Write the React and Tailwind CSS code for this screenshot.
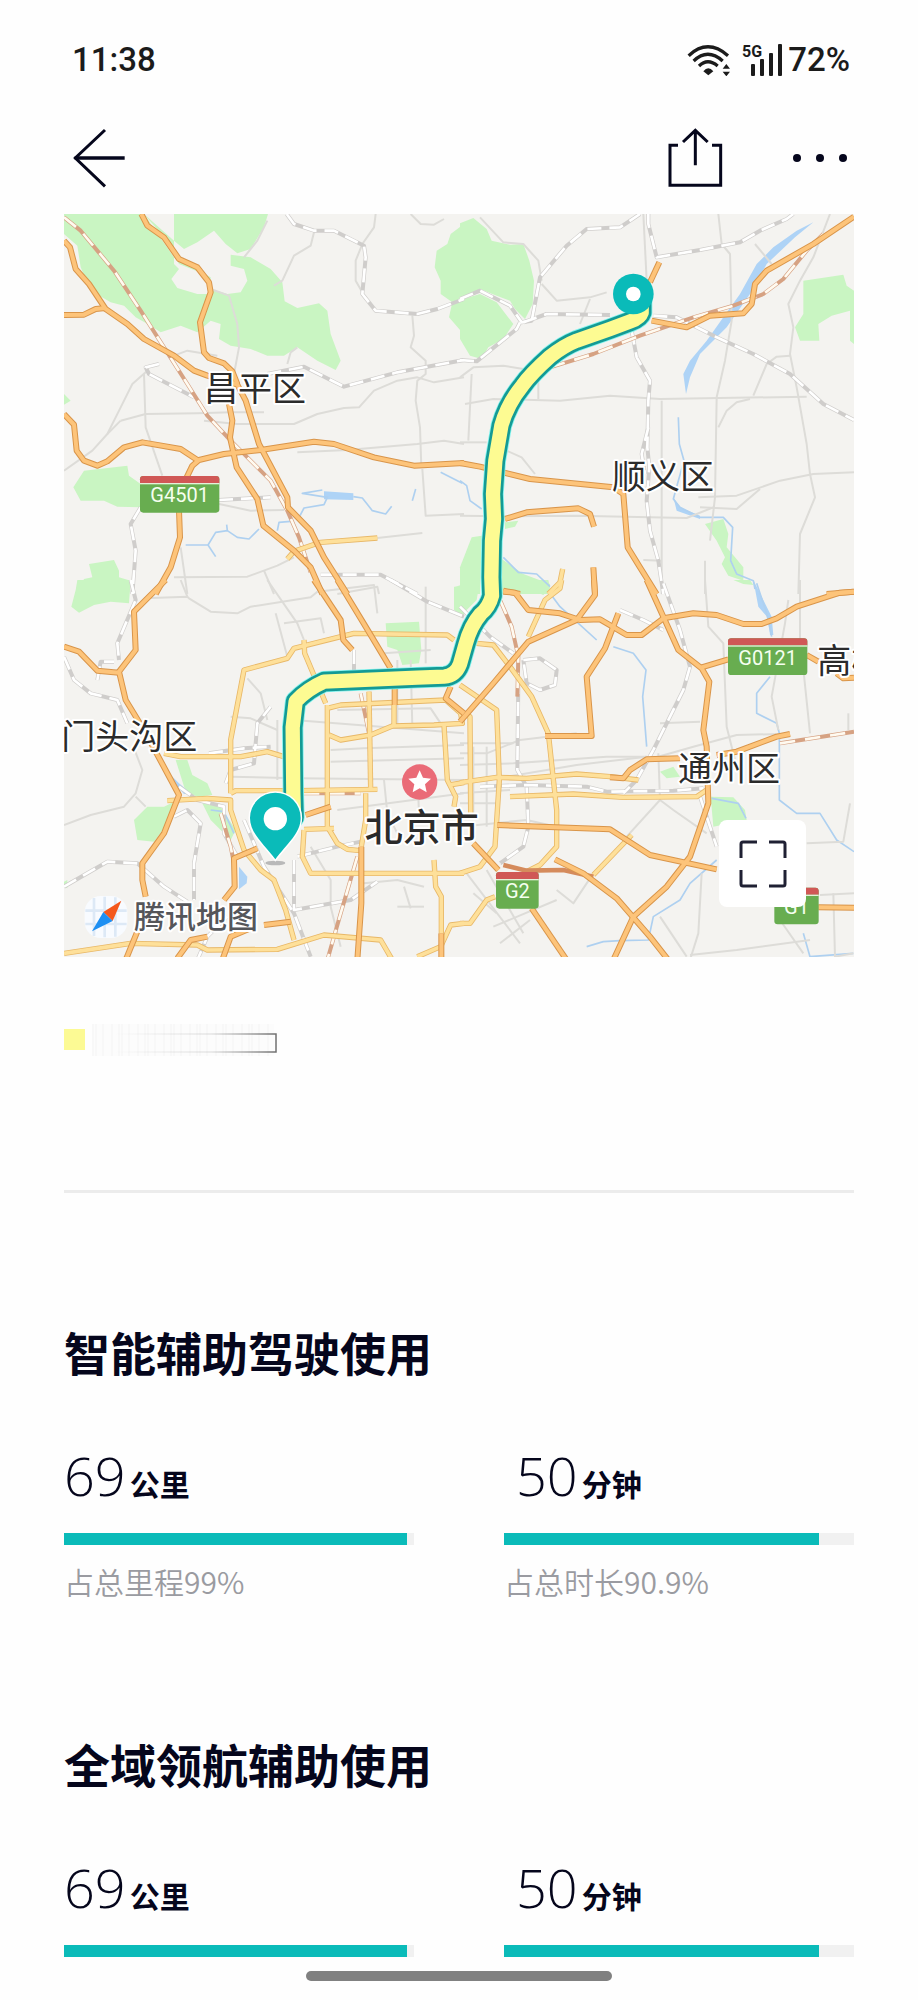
const mapTiles = [
  {
    x: 0,
    y: 0,
    parks: [
      "0,0 240,0 300,70 345,150 420,180 440,240 400,240 340,222 322,195 345,165 330,150 330,80 360,105 400,85 450,50 485,90 520,118 560,105 600,40 612,0 330,0 330,80 240,0 0,0 0,60 40,95 50,160 80,230 140,265 180,275 215,310 260,335 290,355 350,335 400,355 440,320 470,330 465,375 500,395 560,405 610,425 660,425 700,400 760,440 815,468 830,440 800,360 790,290 765,268 700,282 662,262 655,205 620,165 560,130 500,122 500,155 540,165 550,200 530,235 490,240 440,225 440,190 330,130 240,0",
      "60,770 190,755 195,785 230,810 230,880 160,878 120,860 50,860 28,820",
      "75,1050 150,1038 165,1070 165,1090 200,1100 195,1140 40,1140 60,1095 85,1090",
      "0,540 20,560 0,572",
      "1200,30 1160,60 1150,90 1118,110 1112,160 1130,200 1130,240 1165,265 1155,310 1190,350 1200,370",
      "1170,1120 1200,1110 1200,1140 1170,1140",
    ],
    water: ["780,832 868,838 868,858 780,856"],
    streams: [
      "708,905 720,882 780,872 790,850 715,838 775,828",
      "868,848 895,852 925,890 965,900 983,877",
      "365,993 432,993 455,955 490,950 520,970 555,975 585,945",
      "432,993 455,1028",
      "640,950 645,925 680,922",
      "490,950 488,932",
      "1055,825 1045,860",
      "1130,775 1195,808",
    ],
    minor: [
      "440,225 495,245 520,330 525,400 510,480",
      "610,20 580,80 540,130",
      "750,55 740,95 690,125 655,200 630,215",
      "935,0 930,40 895,90 875,140 875,200 895,235",
      "1040,0 1070,30 1110,32 1140,15",
      "1045,305 1050,365 1040,400 1085,440 1085,480 1060,500 1055,560 1068,640 1072,760",
      "0,770 85,710 130,660 170,580 205,510 250,470",
      "240,480 245,640 295,785",
      "170,620 245,600 400,598 500,595 600,595",
      "420,620 520,630 690,630 760,600 840,582 885,580 930,530 1000,500 1060,490 1110,505 1200,490",
      "700,715 850,708 1060,690 1140,680 1200,690",
      "1075,765 1085,905 1200,900",
      "330,1090 550,1088 640,1055 690,1030",
      "350,1000 370,1140",
      "600,1070 630,1140",
      "465,870 560,890 660,888",
      "940,972 1075,957",
      "330,425 370,410 460,425",
      "670,450 680,415 700,400",
      "820,1140 940,1118 945,1140",
      "170,620 130,660",
    ],
    rails: [
      "668,0 690,30 750,50 810,50 900,95 905,130 895,240 935,290 1060,300 1120,285 1200,255",
      "610,480 720,458 840,518 1000,475 1200,438",
      "285,450 245,460 255,480 390,550",
      "770,1082 950,1082 1060,1140",
      "465,858 620,850",
      "230,880 200,930 215,1010 205,1140",
    ],
    brownRails: [
      "0,10 50,50 150,170 230,290 300,400 370,510 430,605 500,680 620,800 670,890 705,970 740,1075",
    ],
    roads: [
      "232,0 250,35 300,70 345,135 400,160 435,205 440,235 408,325 420,415 435,432 480,448 505,472 520,510",
      "0,80 18,100 35,165 75,210 125,285 190,330 240,375 330,425 390,470 430,485 520,512 545,560 585,690 670,850 672,880 740,950 780,1030 850,1140",
      "0,303 60,302 95,285 125,282",
      "0,600 30,632 38,710 60,740 100,755 130,742 180,700 235,685 350,705 400,738",
      "345,890 348,970 320,1060 275,1140",
      "368,790 385,755 405,738 480,720 590,708 750,683 810,690 930,730 1050,755 1200,747",
      "495,570 505,620 498,670 518,760 580,855 598,935 690,1010 740,1060 775,1140",
    ],
    yellowRoads: ["670,1035 690,1012 770,985 940,972"],
  },
  {
    x: 1188,
    y: 0,
    parks: [
      "0,28 40,12 80,45 95,80 150,92 190,90 208,140 222,200 218,270 195,315 165,285 150,260 110,245 60,225 0,255",
      "0,258 60,240 110,265 160,330 130,375 85,400 65,435 30,425 0,375",
      "1030,200 1150,182 1160,215 1182,230 1182,390 1170,380 1170,290 1115,305 1075,330 1078,380 1020,380 1005,340 1030,300",
      "735,930 790,915 805,960 800,1000 850,1060 850,1100 805,1085 785,1050 795,1030 770,980",
      "35,970 65,965 60,1140 0,1140 0,1060",
      "125,1035 190,1080 270,1110 265,1140 125,1140",
      "135,925 175,920 165,938 135,945",
    ],
    water: [
      "1060,25 1005,70 920,150 870,240 800,340 720,420 690,490 678,540 670,480 690,440 740,380 790,310 840,240 890,150 940,100 1010,50",
      "640,850 660,880 720,905 720,915 650,890",
    ],
    streams: [
      "655,610 658,690 672,740 655,800 640,855 660,880 720,910 790,910 818,940 812,1040 830,1080 880,1100 885,1125",
      "0,800 20,815 30,860 65,885",
      "130,1030 175,1075 230,1080 270,1118",
    ],
    minor: [
      "60,10 130,85 190,90 235,140 245,200",
      "245,210 290,260 390,250 440,235",
      "390,255 360,330",
      "775,0 785,90 810,120 815,320 795,440 770,550 765,850 750,980",
      "885,90 935,150",
      "1110,0 1060,130 1020,200 985,270 1000,340 990,420 1010,520 1040,690 1050,780 1065,850 1020,960 1015,1140",
      "15,570 100,555 300,560 450,545 600,555 1040,548",
      "0,490 40,460 130,455 190,465",
      "35,480 25,680",
      "0,685 80,685",
      "235,490 235,555",
      "605,560 605,860 605,1140",
      "880,545 920,450 950,428 990,425",
      "775,640 800,590 830,565 870,555",
      "140,710 185,730 225,780",
      "0,905 130,907 350,905 680,912 760,880",
      "715,850 830,845 960,800 1060,780 1182,775",
      "720,880 830,885 900,825",
      "550,0 560,200",
      "735,1040 735,1140",
      "550,1038 605,1040",
    ],
    rails: [
      "0,255 60,230 150,275 185,325 215,320 240,190 320,95 380,45 480,40 540,0",
      "0,438 50,442 170,345 180,325",
      "190,325 260,300 450,303",
      "565,0 565,30 590,130 720,108 840,85 900,50 980,15 1000,0",
      "580,305 650,310 770,370 880,420 990,480 1090,570 1182,618",
      "515,350 530,430 570,500 565,560 562,700 568,760 560,860 570,950 595,1040 610,1140",
      "565,640 545,720 555,780",
    ],
    brownRails: ["270,460 400,420 540,365 700,310 820,275 910,240 970,195 1040,110 1090,60"],
    roads: [
      "598,145 570,205",
      "575,320 680,340 750,305 850,298 875,270 885,210 920,170 1060,90 1182,8",
      "0,747 60,758 210,795 460,820 490,840 503,1000 540,1060 590,1140",
      "135,915 200,895 355,883 390,900 402,938",
      "400,1060 405,1140",
      "130,1130 180,1140",
      "1100,1140 1182,1133",
    ],
    yellowRoads: ["308,1065 300,1105 265,1140"],
  },
  {
    x: 0,
    y: 1098,
    parks: [
      "40,0 200,0 195,70 140,65 90,75 45,98 22,80 35,30",
      "965,130 1065,125 1072,210 1065,250 1015,255 1000,210 970,200",
      "335,540 370,540 385,585 430,610 445,645 400,650 365,635",
      "330,665 300,680 250,680 210,720 220,780 270,785 300,745",
      "415,670 470,680 515,750 500,780 440,720",
      "1170,20 1200,20 1200,110 1170,90",
      "0,905 10,900 10,925 0,920",
    ],
    water: ["525,860 550,890 548,910 525,928", "315,580 345,610 380,640 360,642 330,610"],
    streams: ["440,690 480,695 510,760"],
    minor: [
      "240,55 370,50 375,55 440,95 520,100 560,80 740,52 760,35 930,15 940,100",
      "350,0 370,50",
      "610,0 700,130 720,180",
      "635,100 670,230",
      "660,130 770,115 780,160",
      "550,295 590,340 610,420",
      "210,505 235,570 215,640 180,680 80,705 0,735",
      "215,650 245,680",
      "500,410 560,415 640,450",
      "500,590 700,595 1200,600",
      "800,510 900,505 1200,495",
      "800,545 1200,535",
      "690,420 1200,460",
      "820,690 1200,640",
      "820,390 1100,385 1130,430",
      "740,800 800,900 800,980 830,1100",
      "1000,240 1000,440",
      "1040,240 1045,440",
      "960,220 1100,210",
      "1085,20 1085,250",
      "960,600 970,700 1000,760",
      "1060,580 1065,700",
      "640,600 640,420",
      "900,910 1000,900 1080,920",
      "1000,980 1080,980",
      "1020,920 1040,985",
    ],
    rails: [
      "200,0 215,60 160,190 165,240",
      "0,230 30,300 80,340 160,360 190,430",
      "100,300 110,245 150,245",
      "980,0 1090,65 1200,110",
      "0,920 130,845 220,850 300,920 370,965",
      "330,710 370,690 410,730 390,850 390,960",
      "435,520 540,505 620,500",
      "485,610 500,570 570,550 580,430 620,380",
      "345,620 400,660 480,680 480,760 520,830",
      "540,720 600,860 690,1000 740,1130",
      "690,840 690,990 860,960 940,905",
      "700,830 820,800 890,785",
      "870,210 870,330",
      "490,1010 430,1070 400,1140",
    ],
    brownRails: ["890,340 915,460", "880,830 830,1000 790,1140", "470,700 500,800 510,850", "720,640 890,640"],
    roads: [
      "305,0 210,95 215,210 165,275 185,360 240,450 345,645 300,760 235,850 235,900 245,950",
      "0,200 45,215 100,272 165,278",
      "750,0 830,120 838,180 865,210",
      "820,0 905,140 980,265",
      "992,325 992,375",
      "1160,320 1145,355 1200,400",
      "725,705 800,680",
      "580,805 510,835 512,920 480,960",
      "892,800 892,970 880,1140",
      "600,1035 680,1025",
      "560,1045 500,1070 475,1140",
      "340,1135 380,1080 430,1070",
      "185,1140 230,1030",
      "1132,1060 1132,1140",
    ],
    yellowRoads: [
      "720,180 722,220 785,370",
      "500,640 500,480 540,270 670,235 690,205 870,160 1150,165 1170,180",
      "300,520 350,530 530,530 610,515 660,530",
      "500,640 515,632 700,632 940,628",
      "310,662 430,655 500,660 500,690 540,810 590,870 630,900 665,990 690,1080",
      "790,375 790,740 820,790 850,808 890,812",
      "720,750 715,830 740,880 1200,880",
      "720,748 810,745",
      "790,385 830,375 1145,360 1190,400 1195,430 1110,435 985,438 920,465 830,480 795,465",
      "915,335 920,630",
      "990,375 990,435",
      "1140,435 1150,600 1175,650 1170,680",
      "905,640 905,720 892,800",
      "1200,608 1155,615",
      "0,1120 200,1090 400,1095 430,1110 640,1108 780,1065 950,1080 985,1140",
      "1110,840 1115,920 1132,950 1132,1060",
      "1200,1030 1160,1035 1130,1100 1060,1130",
    ],
  },
  {
    x: 1188,
    y: 1098,
    parks: [
      "0,0 60,0 50,60 0,110",
      "160,0 265,0 270,25 250,45 190,20",
      "752,650 820,652 855,690 860,720 760,740",
      "600,575 640,560 660,590 620,595",
      "820,0 870,0 880,15 850,12",
    ],
    water: ["880,0 910,60 935,110 940,165 930,165 925,115 895,80"],
    streams: [
      "890,10 920,100 935,170",
      "930,290 890,340 890,400 950,430 958,460 958,660 1010,700 1080,700 1130,780 1182,815",
      "460,200 520,220 558,270 548,350 560,500",
      "270,40 300,80 410,180",
      "755,655 835,670 858,715",
      "770,840 690,910 660,960 580,1010 565,1080 480,1082 430,1085 380,1100",
      "1030,1060 1050,1130 1180,1120",
    ],
    minor: [
      "600,1010 680,1130",
      "735,0 745,140 790,190 800,440 830,560",
      "1020,0 1020,170 1050,460",
      "985,60 975,130 935,350 955,450",
      "690,1140 715,1060 725,880",
      "690,1125 830,1110 1050,1080",
      "600,430 720,425",
      "80,600 350,555 560,530",
      "0,520 80,520 180,480 350,460",
      "0,490 160,490",
      "0,555 160,550 440,530 560,530",
      "560,540 700,500 830,465 960,462",
      "40,500 40,700",
      "80,500 80,740",
      "500,770 600,660 640,690 740,760",
      "600,660 595,520",
      "20,880 180,1090",
      "80,870 190,1060",
      "100,1040 290,960",
      "120,1090 210,1020",
      "290,930 340,970 400,880",
      "40,940 110,1000",
      "1120,940 1125,1130 1180,1120",
      "1080,945 1182,940",
      "960,1020 1030,1120",
      "1040,790 1150,785 1170,670",
      "1165,400 1165,450",
      "0,640 150,630",
      "0,670 110,670",
      "0,740 200,720 290,740",
    ],
    rails: [
      "190,240 240,235 290,270 285,315 240,330 200,310 190,240",
      "480,90 550,120 610,150",
      "610,10 660,150 690,260 670,330 580,510",
      "175,300 172,570 200,620 205,740 190,800 120,850",
      "60,620 200,615 380,620 440,635 640,632 730,625",
      "0,80 90,170 160,220",
      "720,650 770,800",
      "580,510 530,600 490,640",
    ],
    brownRails: ["120,60 155,140 175,230 172,350", "960,490 1100,468 1182,455"],
    roads: [
      "130,35 165,38 205,90 300,100 360,120 420,118 500,165 545,165 610,115 700,100 770,105 850,132 905,132 950,115 1010,80 1140,38 1182,35",
      "402,0 405,45 350,120 205,185 100,310 0,425",
      "475,100 435,205 380,290 395,468 255,468",
      "560,0 610,110 655,210 725,265 748,305 730,450 740,500 745,670 690,830 620,920 520,1010 460,1140",
      "725,262 805,238",
      "1040,225 1075,245",
      "1130,280 1150,295 1182,293",
      "450,592 490,595 510,570 560,538 660,535",
      "770,525 830,515 950,470 990,462",
      "112,735 450,748 570,825 770,868",
      "285,838 370,880 470,955 570,1070 625,1140",
      "40,790 115,870",
      "215,985 320,1140",
      "1075,982 1182,983",
    ],
    yellowRoads: [
      "305,0 300,25 255,60 205,170",
      "50,190 100,195 150,260 215,350 265,460 290,690 290,800 240,855 200,875",
      "0,315 110,390 118,600 105,800 60,860 0,880",
      "0,395 30,410 32,700",
      "0,608 110,592 200,595 350,582 450,590 535,600",
      "150,650 340,642 490,652 710,650 740,630",
      "515,765 400,885",
      "0,1030 30,1030 80,960 105,950",
    ],
    darkRoads: ["130,855 200,872 310,870 400,890"],
  },
];

const districts = [
  { name: "昌平区", x: 420, y: 560 },
  { name: "顺义区", x: 1644, y: 826 },
  { name: "门头沟区", x: -8, y: 1606 },
  { name: "通州区", x: 1842, y: 1701 },
  { name: "高楼", x: 2260, y: 1378 },
];

const highways = [
  { code: "G4501", x: 228, y: 786, width: 238 },
  { code: "G0121", x: 1992, y: 1273, width: 238 },
  { code: "G2", x: 1296, y: 1974, width: 128 },
  { code: "G1", x: 2131, y: 2021, width: 133 },
];

const routePath =
  "M1733 262V296Q1728 312 1700 322L1638 345L1538 380Q1500 395 1458 428Q1400 480 1375 515Q1330 570 1312 635L1294 740L1287 840L1290 915L1284 980L1282 1090L1284 1145Q1275 1180 1250 1200Q1220 1235 1205 1290L1188 1350Q1175 1385 1140 1388L1060 1391L780 1403Q730 1425 695 1462L686 1540L688 1740L690 1810";

const sections = [
  {
    title: "智能辅助驾驶使用",
    stats: [
      { value: "69", unit: "公里", fill: 98, note: "占总里程99%" },
      { value: "50", unit: "分钟", fill: 90, note: "占总时长90.9%" },
    ],
  },
  {
    title: "全域领航辅助使用",
    stats: [
      { value: "69", unit: "公里", fill: 98 },
      { value: "50", unit: "分钟", fill: 90 },
    ],
  },
];

function Lines({ kind, stroke, width, dash }) {
  return (
    <g fill="none" stroke={stroke} strokeWidth={width} strokeDasharray={dash} strokeLinejoin="round">
      {mapTiles.map((tile) => (
        <g key={`${tile.x}-${tile.y}`} transform={`translate(${tile.x} ${tile.y})`}>
          {(tile[kind] || []).map((points) => (
            <polyline key={points} points={points} />
          ))}
        </g>
      ))}
    </g>
  );
}

function Areas({ kind, fill }) {
  return (
    <g fill={fill}>
      {mapTiles.map((tile) => (
        <g key={`${tile.x}-${tile.y}`} transform={`translate(${tile.x} ${tile.y})`}>
          {tile[kind].map((points) => (
            <polygon key={points} points={points} />
          ))}
        </g>
      ))}
    </g>
  );
}

function RouteMap() {
  return (
    <svg viewBox="0 0 2370 2229" className="block w-full bg-[#f4f3f0]" role="img" aria-label="行程路线">
      <Areas kind="parks" fill="#c9f5c2" />
      <Areas kind="water" fill="#aed3f6" />
      <Lines kind="streams" stroke="#aed0f0" width="5" />
      <Lines kind="minor" stroke="#dddcd8" width="6" />
      <Lines kind="rails" stroke="#cfcdcb" width="12" />
      <Lines kind="rails" stroke="#ffffff" width="8" dash="42 24" />
      <Lines kind="brownRails" stroke="#d6a283" width="12" />
      <Lines kind="brownRails" stroke="#fffaf0" width="8" dash="46 30" />
      <Lines kind="yellowRoads" stroke="#e8b868" width="16" />
      <Lines kind="yellowRoads" stroke="#fee09a" width="11" />
      <Lines kind="darkRoads" stroke="#d58b5c" width="14" />
      <Lines kind="roads" stroke="#d9954a" width="18" />
      <Lines kind="roads" stroke="#fdc47a" width="12" />

      <g fill="none" strokeLinejoin="round">
        <path d={routePath} stroke="#7ff3ee" strokeWidth="64" strokeLinecap="round" />
        <path d={routePath} stroke="#149a95" strokeWidth="59" strokeLinecap="round" />
        <path d={routePath} stroke="#fdfb92" strokeWidth="43" />
      </g>

      <circle cx="1708" cy="240" r="61" fill="#0abbb9" />
      <circle cx="1708" cy="240" r="22" fill="#ffffff" />

      <ellipse cx="634" cy="1947" rx="30" ry="7" fill="#b9b9b9" />
      <path
        d="M634 1936C600 1890 558 1858 558 1812A76 76 0 0 1 710 1812C710 1858 668 1890 634 1936Z"
        fill="#0abbb9"
        stroke="#ffffff"
        strokeWidth="9"
        paintOrder="stroke"
      />
      <circle cx="634" cy="1814" r="35" fill="#ffffff" />

      <circle cx="1067" cy="1704" r="53" fill="#ea6b77" />
      <path
        d="M1067 1669L1077 1691L1101 1694L1083 1711L1088 1735L1067 1723L1046 1735L1051 1711L1033 1694L1057 1691Z"
        fill="#ffffff"
      />

      {highways.map(({ code, x, y, width }) => (
        <g key={code}>
          <rect x={x} y={y} width={width} height="110" rx="10" fill="#68ad50" />
          <path
            d={`M${x} ${y + 21}v-11q0-10 10-10h${width - 20}q10 0 10 10v11z`}
            fill="#d05856"
          />
          <rect x={x} y={y + 21} width={width} height="4" fill="#e3f2d9" />
          <text
            x={x + width / 2}
            y={y + 79}
            textAnchor="middle"
            fontSize="60"
            fill="#f5ffef"
            className="font-['Roboto',sans-serif]"
          >
            {code}
          </text>
        </g>
      ))}

      <g
        className="font-['Noto_Sans_CJK_SC',sans-serif]"
        fill="#2b2b2b"
        stroke="#ffffff"
        strokeWidth="12"
        strokeLinejoin="round"
        paintOrder="stroke"
      >
        {districts.map(({ name, x, y }) => (
          <text key={name} x={x} y={y} fontSize="102">
            {name}
          </text>
        ))}
        <text x="902" y="1882" fontSize="114" fontWeight="500">
          北京市
        </text>
        <text x="210" y="2142" fontSize="93" fontWeight="500" fill="#55565a">
          腾讯地图
        </text>
      </g>

      <g>
        <rect x="62" y="2046" width="128" height="126" rx="48" fill="#f8fbff" />
        <path d="M90 2052v114M122 2048v122M154 2050v118M64 2090h124M64 2130h124" stroke="#dde9f6" strokeWidth="8" />
        <path d="M172 2060L118 2094L146 2121Z" fill="#f4581c" />
        <path d="M84 2152L118 2094L146 2121Z" fill="#1d8ff2" />
      </g>
    </svg>
  );
}

function StatusBar() {
  return (
    <div className="flex h-10 items-center justify-between pr-17 pl-18 font-['Roboto',sans-serif] text-[33px] leading-10 font-medium text-[#1b1b1b]">
      <span>11:38</span>
      <div className="flex items-center">
        <svg width="43" height="32" viewBox="0 0 129 96" fill="none" stroke="#1b1b1b" strokeWidth="10" aria-hidden="true">
          <path d="M5 35Q62-18 123 35M20 51Q62 11 107 51M36 66Q62 41 92 66" />
          <path d="M64 94L49 82Q64 64 79 82Z" fill="#1b1b1b" stroke="none" />
          <path d="M118 60l11 14h-22zM118 97l11-14h-22z" fill="#1b1b1b" stroke="none" />
        </svg>
        <svg className="ml-3" width="42" height="32" viewBox="0 0 42 32" fill="#1b1b1b" aria-hidden="true">
          <text x="0" y="13" fontSize="16" fontWeight="700">
            5G
          </text>
          <rect x="9" y="20" width="4" height="12" rx="1" />
          <rect x="18" y="15" width="4" height="17" rx="1" />
          <rect x="27" y="9" width="4" height="23" rx="1" />
          <rect x="36" y="0" width="4" height="32" rx="1" />
        </svg>
        <span className="ml-1">72%</span>
      </div>
    </div>
  );
}

function NavBar() {
  return (
    <div className="mt-12 flex h-15 items-center justify-between pr-17 pl-18 text-[#05061c]">
      <button type="button" aria-label="返回">
        <svg width="56" height="60" viewBox="0 0 168 180" fill="none" stroke="currentColor" strokeWidth="9">
          <path d="M99 6L10 90L99 175" />
          <path d="M8 90H158" strokeWidth="11" />
        </svg>
      </button>
      <div className="flex items-center gap-16">
        <button type="button" aria-label="分享">
          <svg width="58" height="60" viewBox="0 0 174 180" fill="none" stroke="currentColor" strokeWidth="9">
            <path d="M30 52H6V172H158V52H132M82 8V112M45 42L82 7L119 42" />
          </svg>
        </button>
        <button type="button" aria-label="更多">
          <svg width="60" height="60" viewBox="0 0 60 60" fill="currentColor">
            <circle cx="7" cy="30" r="4" />
            <circle cx="30" cy="30" r="4" />
            <circle cx="53" cy="30" r="4" />
          </svg>
        </button>
      </div>
    </div>
  );
}

function Legend() {
  return (
    <svg className="mt-[67px] block" width="216" height="32" viewBox="0 0 216 32" aria-hidden="true">
      <defs>
        <linearGradient id="outline" gradientUnits="userSpaceOnUse" x1="50" y1="0" x2="212" y2="0">
          <stop offset="0" stopColor="#8a8a8a" stopOpacity="0" />
          <stop offset="0.6" stopColor="#8a8a8a" stopOpacity="0.2" />
          <stop offset="1" stopColor="#707070" />
        </linearGradient>
        <pattern id="smudge" width="26" height="32" patternUnits="userSpaceOnUse">
          <path d="M3 0v32M6 0v32M13 0v32M22 0v32" stroke="#f8f8f8" strokeWidth="2" />
        </pattern>
      </defs>
      <rect y="5" width="21" height="21" fill="#fcfa94" />
      <rect x="28" width="182" height="32" fill="#fcfcfc" />
      <rect x="28" width="182" height="32" fill="url(#smudge)" />
      <path d="M50 10H212V28H50" fill="none" stroke="url(#outline)" strokeWidth="1.5" />
    </svg>
  );
}

function Stat({ value, unit, fill, note, indent }) {
  return (
    <div className="flex-1">
      <p className={`flex items-baseline gap-1 leading-15 ${indent ? "pl-3" : ""}`}>
        <span className="font-['Open_Sans',sans-serif] text-[54px] font-[330]">{value}</span>
        <span className="text-[30px] font-bold">{unit}</span>
      </p>
      <div className="mt-5 h-3 bg-[#f1f1f1]">
        <div className="h-full bg-[#0abbb9]" style={{ width: `${fill}%` }} />
      </div>
      {note && <p className="mt-4 text-[30px] leading-10 font-[350] text-[#9a9ba1]">{note}</p>}
    </div>
  );
}

function App() {
  return (
    <main className="min-h-screen bg-[#fefefe] pt-10 pb-[18px] font-['Noto_Sans_CJK_SC',sans-serif] text-[#05061c]">
      <StatusBar />
      <NavBar />
      <div className="px-16">
        <div className="relative mt-[26px]">
          <RouteMap />
          <button
            type="button"
            aria-label="全屏"
            className="absolute right-12 bottom-[50px] flex size-[87px] items-center justify-center rounded-lg bg-white"
          >
            <svg width="48" height="48" viewBox="0 0 48 48" fill="none" stroke="#1f2033" strokeWidth="3">
              <path d="M2 18V4Q2 2 4 2H18M30 2H44Q46 2 46 4V18M46 30V44Q46 46 44 46H30M18 46H4Q2 46 2 44V30" />
            </svg>
          </button>
        </div>
        <Legend />
        <hr className="mt-[134px] h-[3px] border-0 bg-[#ececec]" />
        <div className="mt-32 flex flex-col gap-[132px]">
          {sections.map((section) => (
            <section key={section.title}>
              <h2 className="text-[46px] leading-15 font-bold">{section.title}</h2>
              <div className="mt-16 flex gap-[90px]">
                {section.stats.map((stat, index) => (
                  <Stat key={stat.unit} {...stat} indent={index > 0} />
                ))}
              </div>
            </section>
          ))}
        </div>
      </div>
      <div className="mx-auto mt-[14px] h-[10px] w-1/3 rounded-full bg-[#808080]" />
    </main>
  );
}

export default App;
